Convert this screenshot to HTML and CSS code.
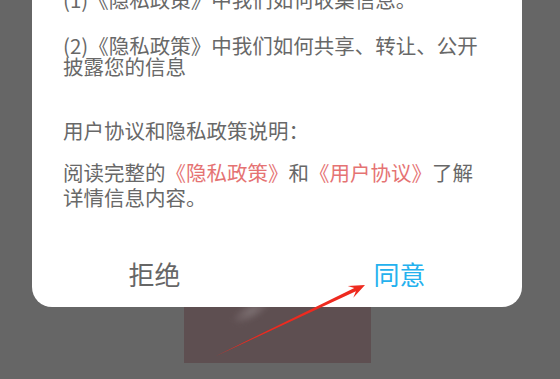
FILE: index.html
```html
<!DOCTYPE html>
<html lang="zh-CN">
<head>
<meta charset="utf-8">
<title>隐私政策</title>
<link rel="stylesheet" href="styles.css">
</head>
<body>
<div class="page">
  <div class="photo"><div class="photo-shape"></div></div>
</div>
<div class="dialog">
  <p class="para p1">(1)《隐私政策》中我们如何收集信息。</p>
  <p class="para p2">(2)《隐私政策》中我们如何共享、转让、公开披露您的信息</p>
  <p class="para p3">用户协议和隐私政策说明：</p>
  <p class="para p4">阅读完整的<span class="link">《隐私政策》</span>和<span class="link">《用户协议》</span>了解详情信息内容。</p>
  <div class="actions">
    <button class="btn btn-refuse">拒绝</button>
    <button class="btn btn-agree">同意</button>
  </div>
</div>
<svg class="arrow" width="560" height="379" viewBox="0 0 560 379">
  <polygon points="215,356.5 354.3,288.1 347.7,286 365,285 353.3,297.7 355.9,291.3" fill="#ee2a1f"/>
</svg>
</body>
</html>
```
FILE: styles.css
```css
html, body {
  margin: 0;
  padding: 0;
}
body {
  width: 560px;
  height: 379px;
  overflow: hidden;
  background: #666666;
  position: relative;
  font-family: "Noto Sans CJK SC", "Noto Sans", sans-serif;
}
.page {
  padding-top: 240px;
  display: flex;
  justify-content: flex-start;
  padding-left: 184px;
}
.photo {
  width: 187px;
  height: 123px;
  background: #5e4f51;
  position: relative;
  overflow: hidden;
}
.photo-shape {
  position: absolute;
  left: 45px;
  top: 62px;
  width: 45px;
  height: 18px;
  background: radial-gradient(ellipse at center, #7d7072 0%, rgba(94,79,81,0) 70%);
  transform: rotate(-30deg);
  filter: blur(2px);
}
.dialog {
  position: absolute;
  left: 32px;
  top: -11px;
  width: 490px;
  box-sizing: border-box;
  background: #ffffff;
  border-radius: 0 0 20px 20px;
  padding: 0 30px 0 31px;
}
.para {
  margin: 0;
  font-size: 20.5px;
  line-height: 21px;
  color: #686868;
}
.p1 { margin-bottom: 24.5px; }
.p2 { margin-bottom: 43px; }
.p3 { margin-bottom: 19px; }
.p4 { margin-bottom: 0; line-height: 25px; }
.link { color: #e57373; }
.actions {
  display: flex;
  margin: 51px -30px 0 -31px;
  padding-bottom: 20px;
}
.btn {
  flex: 1;
  border: 0;
  background: transparent;
  padding: 0;
  font-family: inherit;
  font-size: 26px;
  line-height: 26px;
  text-align: center;
}
.btn-refuse { color: #666666; }
.btn-agree { color: #24b1ee; }
.arrow {
  position: absolute;
  left: 0;
  top: 0;
}
```
